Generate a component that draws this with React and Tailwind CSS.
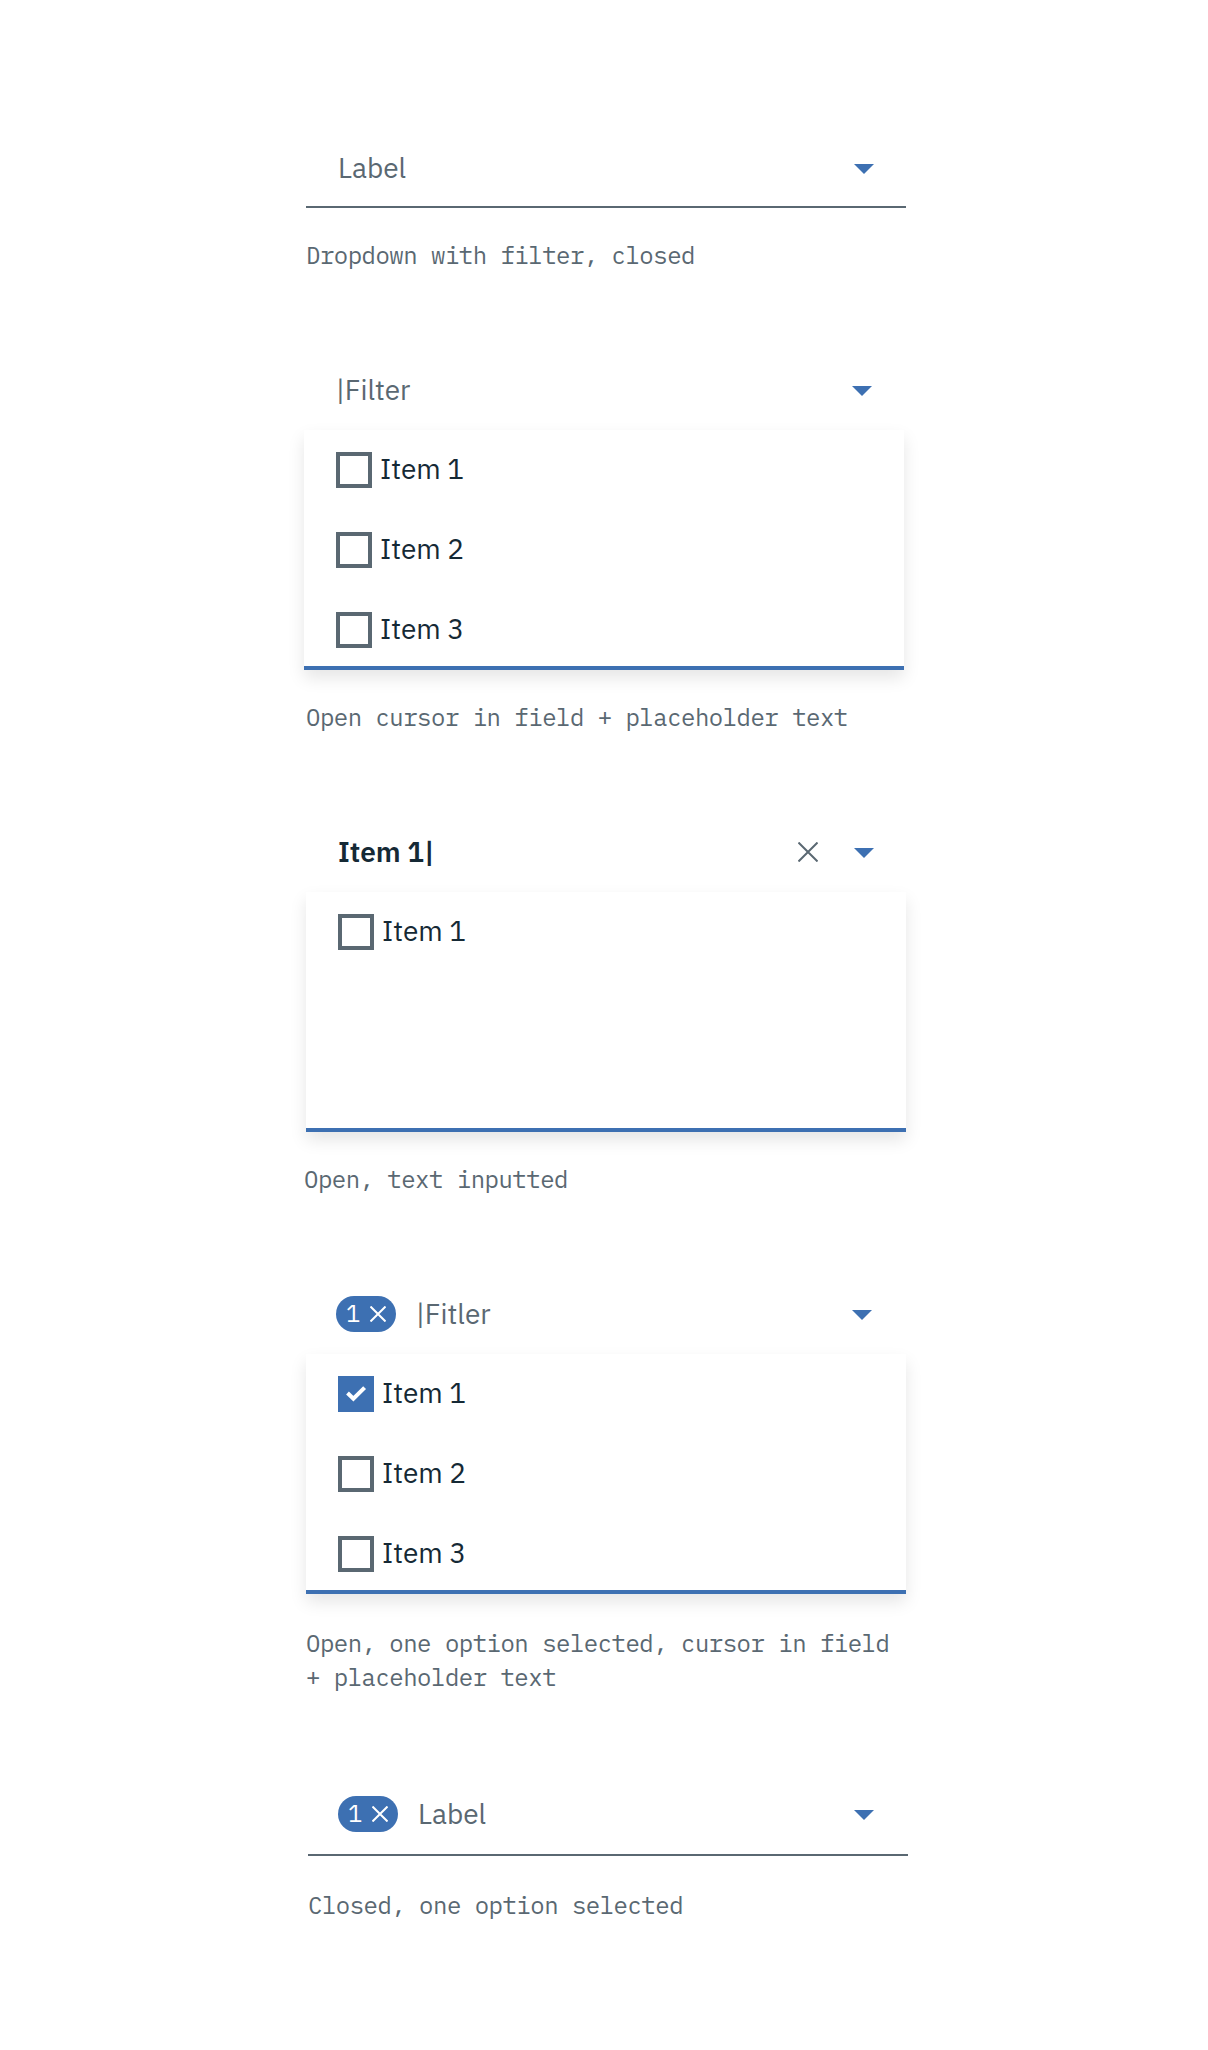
import React from "react";

function Caret() {
  return (
    <svg width="20" height="10" viewBox="0 0 20 10" className="block shrink-0 fill-[#3d70b2]">
      <path d="M0 0h20L10 10z" />
    </svg>
  );
}

function Cross({ size, width }) {
  return (
    <svg width={size} height={size} viewBox={`0 0 ${size} ${size}`} className="block shrink-0" fill="none" stroke="currentColor" strokeWidth={width}>
      <path d={`M.5.5L${size - 0.5} ${size - 0.5}M${size - 0.5}.5L.5 ${size - 0.5}`} />
    </svg>
  );
}

function Field({ count, clearable, className = "", children }) {
  return (
    <div className={`flex h-20 items-center px-8 ${className}`}>
      {count && (
        <div className="mr-5 flex h-9 w-[60px] shrink-0 items-center rounded-full bg-[#3d70b2] pl-2.5 text-white">
          <span className="w-6 pb-0.5 text-2xl leading-[34px]">{count}</span>
          <Cross size={16} width={2} />
        </div>
      )}
      <div className="flex-1 pb-px text-[28px] leading-[37px] whitespace-pre">{children}</div>
      {clearable && (
        <div className="mr-9">
          <Cross size={20} width={2} />
        </div>
      )}
      <div className="pt-0.5">
        <Caret />
      </div>
    </div>
  );
}

function Item({ checked, children }) {
  return (
    <div className="flex h-20 items-center px-8 text-[28px] leading-[37px] text-[#152935]">
      {checked ? (
        <div className="size-9 shrink-0 bg-[#3d70b2]">
          <svg width="36" height="36" viewBox="0 0 36 36" fill="none" stroke="#fff" strokeWidth="4">
            <path d="M9.5 17l5.9 5.7L26.6 11.6" />
          </svg>
        </div>
      ) : (
        <div className="size-9 shrink-0 border-4 border-[#5a6872]" />
      )}
      <div className="ml-2 pb-[3px]">{children}</div>
    </div>
  );
}

function Panel({ className = "", children }) {
  return (
    <div className={`h-60 border-b-4 border-[#3d70b2] bg-white shadow-[0_8px_16px_rgba(0,0,0,0.1)] ${className}`}>
      {children}
    </div>
  );
}

function Caption({ className = "", children }) {
  return (
    <p className={`font-['IBM_Plex_Mono','Liberation_Mono',monospace] text-2xl leading-[34px] tracking-[-0.51px] whitespace-pre ${className}`}>
      {children}
    </p>
  );
}

export default function App() {
  return (
    <main className="flex h-[2050px] w-[1208px] flex-col bg-white pt-32 pl-[304px] font-['IBM_Plex_Sans',Roboto,sans-serif] text-[#5a6872] antialiased">
      <section className="ml-0.5 h-[222px] w-[600px]">
        <Field className="border-b-2 border-[#5a6872] pt-0.5">Label</Field>
        <Caption className="mt-[30px]">Dropdown with filter, closed</Caption>
      </section>

      <section className="h-[462px] w-[600px]">
        <Field>|Filter</Field>
        <Panel>
          <Item>Item 1</Item>
          <Item>Item 2</Item>
          <Item>Item 3</Item>
        </Panel>
        <Caption className="mt-[30px] ml-0.5">Open cursor in field + placeholder text</Caption>
      </section>

      <section className="ml-0.5 h-[462px] w-[600px]">
        <Field clearable>
          <span className="font-semibold text-[#152935]">Item 1|</span>
        </Field>
        <Panel>
          <Item>Item 1</Item>
        </Panel>
        <Caption className="mt-[30px] -ml-0.5">Open, text inputted</Caption>
      </section>

      <section className="h-[500px] w-[600px]">
        <Field count="1">|Fitler</Field>
        <Panel className="ml-0.5 w-[600px]">
          <Item checked>Item 1</Item>
          <Item>Item 2</Item>
          <Item>Item 3</Item>
        </Panel>
        <Caption className="mt-8 ml-0.5">{"Open, one option selected, cursor in field\n+ placeholder text"}</Caption>
      </section>

      <section className="ml-0.5 w-[600px]">
        <Field count="1">Label</Field>
        <div className="ml-0.5 h-0.5 w-[600px] bg-[#5a6872]" />
        <Caption className="mt-8 ml-0.5">Closed, one option selected</Caption>
      </section>
    </main>
  );
}
